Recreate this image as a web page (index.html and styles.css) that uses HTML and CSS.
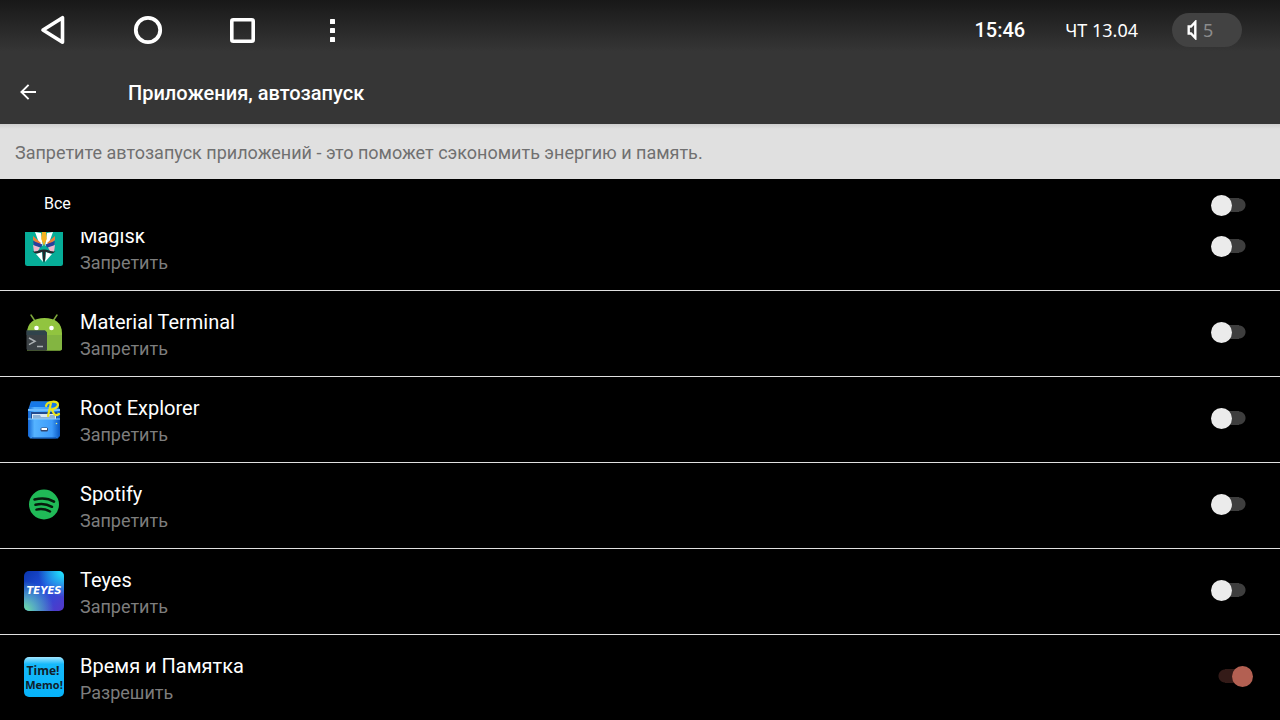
FILE: index.html
```html
<!DOCTYPE html>
<html lang="ru">
<head>
<meta charset="utf-8">
<meta name="viewport" content="width=device-width, initial-scale=1">
<title>Приложения, автозапуск</title>
<link rel="stylesheet" href="styles.css">
</head>
<body>
<div class="screen">
  <div class="top">
    <div class="status">
      <nav class="nav">
        <button class="nav-btn" aria-label="Назад"><svg width="32" height="32" viewBox="0 0 32 32"><path d="M6 16 25.500 3.700V28.300Z" fill="none" stroke="#fff" stroke-width="3.600" stroke-linejoin="round"/></svg></button>
        <button class="nav-btn" aria-label="Домой"><svg width="32" height="32" viewBox="0 0 32 32"><circle cx="16" cy="16" r="12.200" fill="none" stroke="#fff" stroke-width="3.800"/></svg></button>
        <button class="nav-btn" aria-label="Недавние"><svg width="32" height="32" viewBox="0 0 32 32"><rect x="4.800" y="5.800" width="21.400" height="21.400" rx="1.500" fill="none" stroke="#fff" stroke-width="3.600"/></svg></button>
        <button class="nav-btn" aria-label="Меню"><svg width="32" height="32" viewBox="0 0 32 32" fill="#fff"><rect x="13" y="5" width="5" height="5" rx=".6"/><rect x="13" y="14" width="5" height="5" rx=".6"/><rect x="13" y="23" width="5" height="5" rx=".6"/></svg></button>
      </nav>
      <div class="info">
        <span class="time">15:46</span>
        <span class="date">ЧТ 13.04</span>
        <button class="volume" aria-label="Громкость 5"><svg width="12" height="20" viewBox="0 0 12 20"><path d="M2.700 6.500H5L9.300 2V18L5 13.500H2.700Z" fill="none" stroke="#fff" stroke-width="2.400"/></svg><span>5</span></button>
      </div>
    </div>
    <header class="title-bar">
      <button class="back" aria-label="Назад"><svg width="18" height="18" viewBox="0 0 18 18"><path d="M17 9H2.500M9.600 1.800 2.400 9l7.200 7.200" fill="none" stroke="#fff" stroke-width="1.900"/></svg></button>
      <h1 class="title">Приложения, автозапуск</h1>
    </header>
  </div>
  <p class="notice">Запретите автозапуск приложений - это поможет сэкономить энергию и память.</p>
  <div class="all">
    <label for="all">Все</label>
    <input class="switch" type="checkbox" role="switch" id="all">
  </div>
  <ul class="list">
    <li class="row">
      <svg class="icon" viewBox="0 0 40 40">
        <rect x="1" y="1" width="38" height="38" rx="2.500" fill="#06ad98"/>
        <path d="M11 5 15 16 19 19 17 6ZM29 5 25 16 21 19 23 6Z" fill="#fff"/>
        <path d="M18 4h4l.800 8L20 19l-2.800-7Z" fill="#f4b321"/>
        <path d="M9 9 17 16 15 18 9 13ZM31 9 23 16 25 18 31 13Z" fill="#ef7d3a"/>
        <path d="M9 14 18.500 17.500 17 20.500 10 18.500ZM31 14 21.500 17.500 23 20.500 30 18.500Z" fill="#2b3f9c"/>
        <path d="M9 18 16 20.500 14 24 10 25ZM31 18 24 20.500 26 24 30 25Z" fill="#f3b5cc"/>
        <path d="M12 27 18 25 19 35ZM28 27 22 25 21 35Z" fill="#fff"/>
        <path d="M8.500 24C12 26 15 22.500 20 22.500S28 26 31.500 24C29 28 25 26 21.500 24.800L21.200 32 20 36 18.800 32 18.500 24.800C15 26 11 28 8.500 24Z" fill="#25262b"/>
      </svg>
      <label class="text" for="s1"><span class="name">Magisk</span><span class="state">Запретить</span></label>
      <input class="switch" type="checkbox" role="switch" id="s1">
    </li>
    <li class="row">
      <svg class="icon" viewBox="0 0 40 40">
        <path d="M7 2 11 8M33 2 29 8" stroke="#7da63b" stroke-width="1.500" stroke-linecap="round"/>
        <path d="M3 20C3 10 10 5 20.500 5S38 10 38 20V35.500a2 2 0 0 1-2 2H3Z" fill="#91c43f"/>
        <path d="M22 22H38V35.500a2 2 0 0 1-2 2H22Z" fill="#83b541"/>
        <circle cx="12.500" cy="15" r="2.300" fill="#fff"/><circle cx="27.500" cy="15" r="2.300" fill="#fff"/>
        <path d="M2.500 17.500H21l2 2v18H4.500a2 2 0 0 1-2-2Z" fill="#3c4246"/><path d="M2.500 17.500H21l2 2v2.500H2.500Z" fill="#30434b"/>
        <path d="M5 25 11 28.300 5 31.600M13 33.500h6" fill="none" stroke="#adb2b4" stroke-width="1.500"/>
      </svg>
      <label class="text" for="s2"><span class="name">Material Terminal</span><span class="state">Запретить</span></label>
      <input class="switch" type="checkbox" role="switch" id="s2">
    </li>
    <li class="row">
      <svg class="icon" viewBox="0 0 40 40">
        <defs><linearGradient id="cab" x2="1"><stop stop-color="#1265d4"/><stop offset=".2" stop-color="#55b3ff"/><stop offset=".75" stop-color="#3d9bfa"/><stop offset="1" stop-color="#0755c1"/></linearGradient></defs>
        <path d="M7 2.500H33L36 11V36L34 39.500H6L4 36V11Z" fill="url(#cab)"/>
        <path d="M7 2.500H33L34 8H6Z" fill="#1678e8"/>
        <path d="M4 10H36v2H4Z" fill="#6fbdff"/>
        <path d="M7 13H33V21H7Z" fill="#214b91"/><path d="M8 15H32V21H8Z" fill="#dce9f4"/>
        <path d="M9 16h7l1 2H25l1-2h5v4H9Z" fill="#8db3d8"/>
        <path d="M4 20H36V37.500H4Z" fill="url(#cab)"/><path d="M4 20H36" stroke="#8bd0ff"/>
        <rect x="16.500" y="28.500" width="7.500" height="4" rx="1.500" fill="#34466e"/><rect x="17.500" y="29" width="5.500" height="2" fill="#fff"/>
        <path d="M8 39H32" stroke="#0645a1"/>
        <path d="M27 4 24 17M22 7C23 2 34.500 1 34 6 33.500 9.500 28 10.500 26 10.500M28 10.500C29.500 14 30.500 18 35 15" fill="none" stroke="#ece51b" stroke-width="2.200" stroke-linecap="round"/>
        <circle cx="32.500" cy="24.500" r=".8" fill="#dceb82"/>
      </svg>
      <label class="text" for="s3"><span class="name">Root Explorer</span><span class="state">Запретить</span></label>
      <input class="switch" type="checkbox" role="switch" id="s3">
    </li>
    <li class="row">
      <svg class="icon" viewBox="0 0 40 40">
        <circle cx="20" cy="19.500" r="15" fill="#20ba57"/>
        <path d="M10.500 14.500C17 12.800 24.500 13.300 30 16.600M11.500 19.800C17 18.200 23 19 28 21.800M12.500 24.600C17 23.500 21.500 24 26 26.500" fill="none" stroke="#071a0d" stroke-width="2.500" stroke-linecap="round"/>
      </svg>
      <label class="text" for="s4"><span class="name">Spotify</span><span class="state">Запретить</span></label>
      <input class="switch" type="checkbox" role="switch" id="s4">
    </li>
    <li class="row">
      <svg class="icon" viewBox="0 0 40 40">
        <defs>
          <linearGradient id="t1" x2="1" y2="1"><stop stop-color="#0a35ad"/><stop offset=".45" stop-color="#2251dc"/><stop offset="1" stop-color="#5636c8"/></linearGradient>
          <radialGradient id="t2" cx="1" cy="0" r=".65"><stop stop-color="#1ff2ff"/><stop offset="1" stop-color="#1ff2ff" stop-opacity="0"/></radialGradient>
          <radialGradient id="t3" cx="0" cy="1" r=".75"><stop stop-color="#72e4a0"/><stop offset=".4" stop-color="#55a8c4"/><stop offset="1" stop-color="#55a8c4" stop-opacity="0"/></radialGradient>
        </defs>
        <rect width="40" height="40" rx="5" fill="url(#t1)"/><rect width="40" height="40" rx="5" fill="url(#t2)"/><rect width="40" height="40" rx="5" fill="url(#t3)"/>
        <text class="logo-teyes" x="20" y="23" text-anchor="middle">TEYES</text>
      </svg>
      <label class="text" for="s5"><span class="name">Teyes</span><span class="state">Запретить</span></label>
      <input class="switch" type="checkbox" role="switch" id="s5">
    </li>
    <li class="row">
      <svg class="icon" viewBox="0 0 40 40">
        <defs><linearGradient id="m1" x2="0" y2="1"><stop stop-color="#a2e6ff"/><stop offset=".18" stop-color="#16b9fb"/><stop offset="1" stop-color="#06b3fa"/></linearGradient></defs>
        <rect width="40" height="40" rx="5" fill="url(#m1)"/>
        <text class="logo-time" x="19" y="18" text-anchor="middle">Time!</text>
        <text class="logo-memo" x="20" y="32" text-anchor="middle">Memo!</text>
      </svg>
      <label class="text" for="s6"><span class="name">Время и Памятка</span><span class="state">Разрешить</span></label>
      <input class="switch" type="checkbox" role="switch" id="s6" checked>
    </li>
  </ul>
</div>
</body>
</html>
```
FILE: styles.css
```css
* { box-sizing: border-box; }
body {
  margin: 0;
  background: #000;
  color: #fff;
  font-family: Roboto, "Noto Sans", sans-serif;
}
button { padding: 0; border: 0; background: none; color: inherit; font: inherit; }
svg { display: block; }
.screen { display: flex; flex-direction: column; height: 100vh; }
.top { background: linear-gradient(#181818 0, #363636 52px); }
.status { display: flex; justify-content: space-between; align-items: center; height: 60px; padding: 0 38px 0 37px; }
.nav { display: flex; gap: 63px; }
.nav-btn:last-child { margin-left: -5px; }
.info { display: flex; align-items: center; }
.time { font-size: 20px; font-weight: 500; margin-right: 40px; }
.date { font-family: "Noto Sans", sans-serif; font-size: 18px; margin-right: 34px; }
.volume {
  display: flex; align-items: center; gap: 5px;
  width: 70px; height: 34px; padding-left: 14px;
  border-radius: 17px; background: #424242;
  color: #8c8c8c; font-family: "Noto Sans", sans-serif; font-size: 18px;
}
.title-bar { display: flex; align-items: center; height: 64px; padding: 0 19px; }
.title { margin: 0 0 0 91px; padding-top: 2px; font-size: 20px; font-weight: 500; line-height: 26px; }
.notice {
  margin: 0; padding: 15px 15px 13px;
  background: linear-gradient(#cfcfcf 0, #e0e0e0 5px);
  color: #707070; font-size: 18px; line-height: 27px;
}
.all { display: flex; justify-content: space-between; align-items: center; height: 53px; padding: 0 27px 0 44px; font-size: 16px; }
.all label { padding-bottom: 4px; }
.list { flex: 1; min-height: 0; margin: 0; padding: 0; overflow: hidden; list-style: none; }
.row { display: flex; align-items: center; height: 86px; padding: 0 27px 2px 24px; border-bottom: 1px solid #e0e0e0; }
.row:first-child { margin-top: -27px; }
.icon { width: 40px; height: 40px; margin-right: 16px; }
.text { flex: 1; padding-top: 5px; }
.name, .state { display: block; }
.name { font-size: 20px; line-height: 27px; }
.state { color: #7d7d7d; font-size: 18px; line-height: 25px; }
.switch {
  appearance: none;
  display: flex; align-items: center;
  width: 42px; height: 21px; margin: 0;
  background: linear-gradient(#3e3e3e, #3e3e3e) no-repeat 14px 3px / 14px 14px,
    radial-gradient(circle at 7px 7px, #3e3e3e 6px, transparent 7px) no-repeat 21px 3px / 14px 14px;
}
.switch::before { content: ""; width: 21px; height: 21px; border-radius: 50%; background: #ebebeb; }
.switch:checked {
  justify-content: flex-end;
  background: linear-gradient(#341b18, #341b18) no-repeat 14px 3px / 14px 14px,
    radial-gradient(circle at 7px 7px, #341b18 6px, transparent 7px) no-repeat 7px 3px / 14px 14px;
}
.switch:checked::before { background: #b36052; }
.logo-teyes { fill: #fff; font: italic 700 10px "DejaVu Sans", sans-serif; }
.logo-time { fill: #10202a; font: 700 12px "Open Sans", sans-serif; }
.logo-memo { fill: #10202a; font: 700 11px "Open Sans", sans-serif; }
```
